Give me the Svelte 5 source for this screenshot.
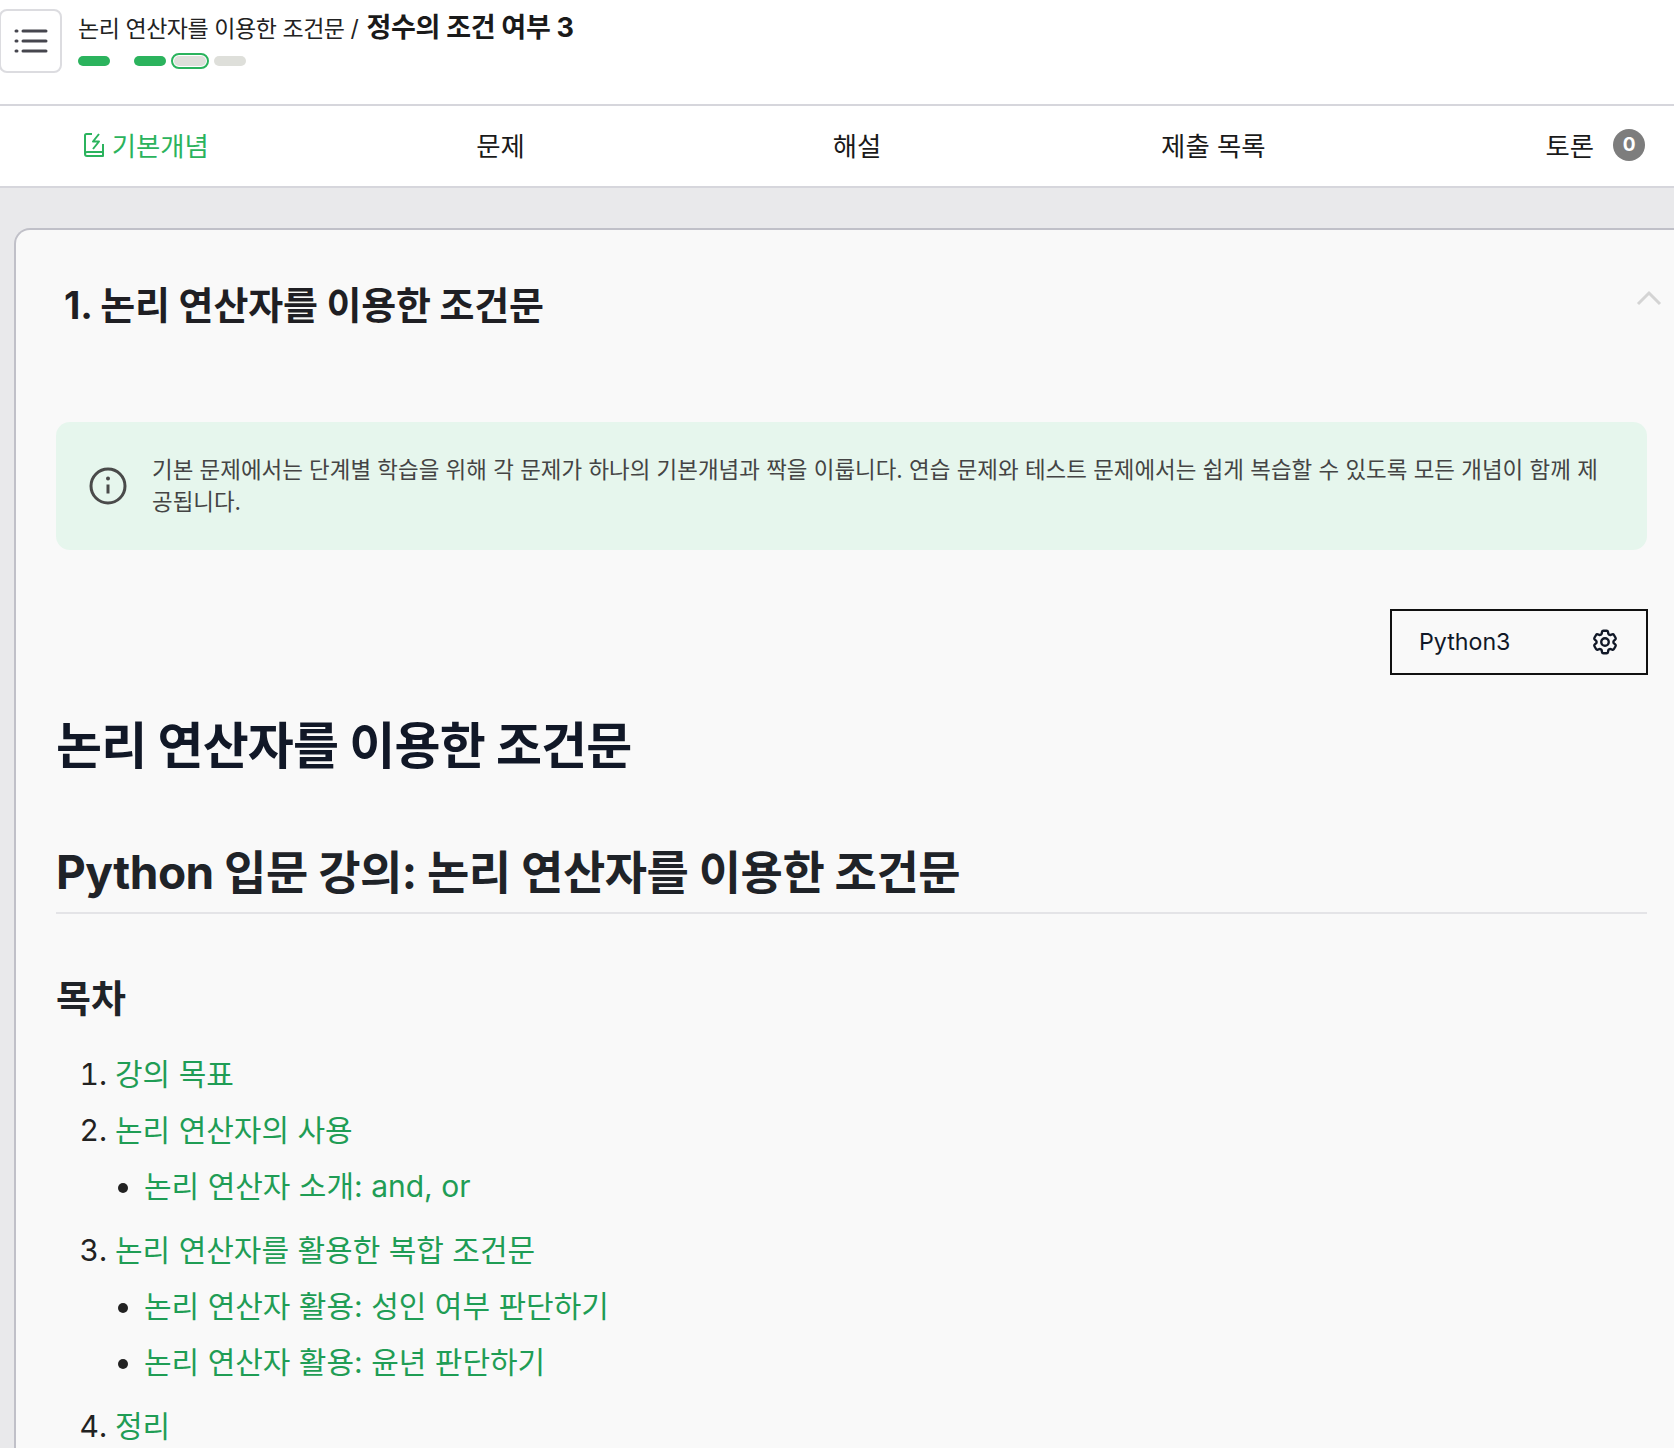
<script>
  const steps = ['done first', 'done', 'current', 'todo'];
  const tabs = [{ label: '기본개념', active: true }, { label: '문제' }, { label: '해설' }, { label: '제출 목록' }, { label: '토론', count: 0 }];
</script>

<div class="page">
  <header class="top">
    <button class="menu" aria-label="목록">
      <svg width="34" height="26" viewBox="0 0 34 26" fill="none" stroke="#46464e">
        <path d="M9 3h23M9 13h23M9 23h23" stroke-width="3" stroke-linecap="round"/>
        <path d="M2 3h1M2 13h1M2 23h1" stroke-width="3" stroke-linecap="round"/>
      </svg>
    </button>
    <div class="crumbs">
      <div class="path">논리 연산자를 이용한 조건문 / <strong>정수의 조건 여부 3</strong></div>
      <div class="steps">
        {#each steps as s}<span class="step {s}"></span>{/each}
      </div>
    </div>
  </header>

  <nav class="tabs">
    {#each tabs as t}
      <div class="tab" class:active={t.active}>
        {#if t.active}
          <svg width="22" height="26" viewBox="0 0 22 26" fill="none" stroke="#2bb35d" stroke-width="2" stroke-linejoin="round">
            <path d="M9 2H3.500A1.500 1.500 0 0 0 2 3.500V22a2 2 0 0 0 2 2h16V12"/>
            <path d="M2 22a2 2 0 0 1 2-2h16"/>
            <path d="M16 2l-6 7.500h6L10 17"/>
          </svg>
        {/if}
        <span class="label">{t.label}{#if t.count !== undefined}<span class="badge">{t.count}</span>{/if}</span>
      </div>
    {/each}
  </nav>

  <main class="wrap">
    <section class="card">
      <div class="card-head">
        <h1>1. 논리 연산자를 이용한 조건문</h1>
        <svg class="chev" width="26" height="16" viewBox="0 0 26 16" fill="none" stroke="#d4d4d4" stroke-width="3"><path d="M2 14L13 3l11 11"/></svg>
      </div>

      <div class="content">
        <div class="info">
          <svg width="38" height="38" viewBox="0 0 38 38" fill="none" stroke="#4a4a4a" stroke-width="3">
            <circle cx="19" cy="19" r="17"/>
            <path d="M19 17.500v9"/>
            <circle cx="19" cy="11.500" r="1" stroke-width="2" fill="#4a4a4a"/>
          </svg>
          <p>기본 문제에서는 단계별 학습을 위해 각 문제가 하나의 기본개념과 짝을 이룹니다. 연습 문제와 테스트 문제에서는 쉽게 복습할 수 있도록 모든 개념이 함께 제공됩니다.</p>
        </div>

        <div class="lang-row">
          <button class="lang">
            <span>Python3</span>
            <svg width="30" height="30" viewBox="0 0 24 24" fill="none" stroke="#111827" stroke-width="1.900" stroke-linecap="round" stroke-linejoin="round">
              <path d="M9.594 3.940c.09-.542.56-.94 1.110-.94h2.593c.55 0 1.020.398 1.110.94l.213 1.281c.063.374.313.686.645.870.074.040.147.083.22.127.324.196.72.257 1.075.124l1.217-.456a1.125 1.125 0 011.370.49l1.296 2.247a1.125 1.125 0 01-.26 1.431l-1.003.827c-.293.24-.438.613-.431.992a6.759 6.759 0 010 .255c-.007.378.138.75.43.99l1.005.828c.424.35.534.954.26 1.430l-1.298 2.247a1.125 1.125 0 01-1.369.491l-1.217-.456c-.355-.133-.75-.072-1.076.124a6.570 6.570 0 01-.22.128c-.331.183-.581.495-.644.869l-.213 1.280c-.09.543-.56.941-1.110.941h-2.594c-.55 0-1.020-.398-1.110-.94l-.213-1.281c-.062-.374-.312-.686-.644-.87a6.520 6.520 0 01-.22-.127c-.325-.196-.72-.257-1.076-.124l-1.217.456a1.125 1.125 0 01-1.369-.49l-1.297-2.247a1.125 1.125 0 01.26-1.431l1.004-.827c.292-.24.437-.613.43-.992a6.932 6.932 0 010-.255c.007-.378-.138-.75-.43-.99l-1.004-.828a1.125 1.125 0 01-.26-1.430l1.297-2.247a1.125 1.125 0 011.370-.491l1.216.456c.356.133.751.072 1.076-.124.072-.044.146-.087.22-.128.332-.183.582-.495.644-.869l.214-1.281z"/>
              <circle cx="12" cy="12" r="3"/>
            </svg>
          </button>
        </div>

        <h2 class="h-main">논리 연산자를 이용한 조건문</h2>
        <h3 class="h-sub">Python 입문 강의: 논리 연산자를 이용한 조건문</h3>
        <h4 class="h-toc">목차</h4>

        <ol class="toc">
          <li><a href="#a">강의 목표</a></li>
          <li>
            <a href="#a">논리 연산자의 사용</a>
            <ul><li><a href="#a">논리 연산자 소개: and, or</a></li></ul>
          </li>
          <li>
            <a href="#a">논리 연산자를 활용한 복합 조건문</a>
            <ul>
              <li><a href="#a">논리 연산자 활용: 성인 여부 판단하기</a></li>
              <li><a href="#a">논리 연산자 활용: 윤년 판단하기</a></li>
            </ul>
          </li>
          <li><a href="#a">정리</a></li>
        </ol>
      </div>
    </section>
  </main>
</div>

<style>
  :global(body) {
    margin: 0;
    overflow: hidden;
    background: #e9e9eb;
    font-family: Inter, "Noto Sans CJK KR", sans-serif;
    color: #111827;
  }
  .page { width: 1674px; height: 1448px; overflow: hidden; }
  .top {
    height: 104px;
    background: #fff;
    border-bottom: 2px solid #d6d6dc;
    display: flex;
    align-items: flex-start;
  }
  .menu {
    width: 63px;
    height: 64px;
    margin: 9px 0 0 -1px;
    padding: 0;
    background: #fff;
    border: 2px solid #dcdce0;
    border-radius: 8px;
    display: flex;
    align-items: center;
    justify-content: center;
    flex: none;
  }
  .crumbs { margin-left: 16px; padding-top: 12px; }
  .path { font-size: 23px; line-height: 32px; color: #222; letter-spacing: -0.45px; white-space: nowrap; }
  .path strong { font-size: 27px; font-weight: 700; color: #1a1a1a; letter-spacing: -0.3px; margin-left: 2px; }
  .steps { display: flex; align-items: center; gap: 8px; margin-top: 11px; height: 10px; }
  .step { width: 32px; height: 10px; border-radius: 5px; background: #dedfda; display: block; }
  .step.done { background: #2bb35d; }
  .step.first { margin-right: 16px; }
  .step.current { outline: 2px solid #2bb35d; outline-offset: 1px; }
  .tabs {
    height: 80px;
    background: #fff;
    border-bottom: 2px solid #d6d6dc;
    display: grid;
    grid-template-columns: repeat(5, 1fr);
    width: 1782px;
    margin-left: -34px;
  }
  .tab {
    display: flex;
    align-items: center;
    justify-content: center;
    gap: 7px;
    padding-bottom: 3px;
    font-size: 26.400px;
    color: #1a1a1a;
  }
  .tab.active { color: #2bb35d; padding-left: 3px; }
  .label { position: relative; }
  .badge {
    position: absolute;
    left: calc(100% + 19px);
    top: 50%;
    margin-top: -16px;
    width: 32px;
    height: 32px;
    border-radius: 50%;
    background: #7d7d7d;
    color: #fff;
    font-size: 19px;
    font-weight: 700;
    display: flex;
    align-items: center;
    justify-content: center;
  }
  .wrap { padding: 40px 0 0 14px; }
  .card {
    background: #f9f9f9;
    border: 2px solid #c0c0c8;
    border-right: 0;
    border-bottom: 0;
    border-top-left-radius: 16px;
    height: 1300px;
  }
  .card-head { display: flex; justify-content: space-between; padding: 52px 12px 0 48px; height: 120px; box-sizing: border-box; }
  h1 { margin: 0; font-size: 38px; line-height: 46px; font-weight: 700; color: #1f1f24; letter-spacing: -0.2px; }
  .chev { margin-top: 8px; }
  .content { padding: 72px 27px 0 40px; }
  .info {
    height: 128px;
    box-sizing: border-box;
    background: #e6f6ed;
    border-radius: 14px;
    padding: 0 33px 0 33px;
    display: flex;
    align-items: center;
    gap: 25px;
    color: #444;
  }
  .info svg { flex: none; }
  .info p { margin: 0; font-size: 22.440px; line-height: 32px; word-break: break-all; }
  .lang-row { display: flex; justify-content: flex-end; margin: 59px -1px 0 0; }
  .lang {
    width: 258px;
    height: 66px;
    box-sizing: border-box;
    background: transparent;
    border: 2px solid #111;
    padding: 0 26px 0 27px;
    display: flex;
    align-items: center;
    justify-content: space-between;
    font: 23.200px Inter, sans-serif;
    color: #111827;
  }
  h2, h3, h4 { margin: 0; font-weight: 700; color: #111827; }
  .h-main { margin-top: 41px; font-size: 50px; line-height: 60px; letter-spacing: -0.8px; }
  .h-sub { margin-top: 70px; padding-bottom: 14px; border-bottom: 2px solid #e4e4e7; font-size: 46px; line-height: 52px; letter-spacing: -0.5px; color: #1f2328; }
  .h-toc { margin-top: 61px; font-size: 38px; line-height: 46px; color: #1f2328; }
  .toc { margin: 31px 0 0; padding: 0 0 0 59px; font-size: 30px; line-height: 44px; color: #222; }
  .toc li { margin-top: 12px; }
  .toc ul { margin: 12px 0 0; padding: 0 0 8px 29px; list-style: disc; }
  .toc a { color: #1f9d55; text-decoration: none; }
</style>
